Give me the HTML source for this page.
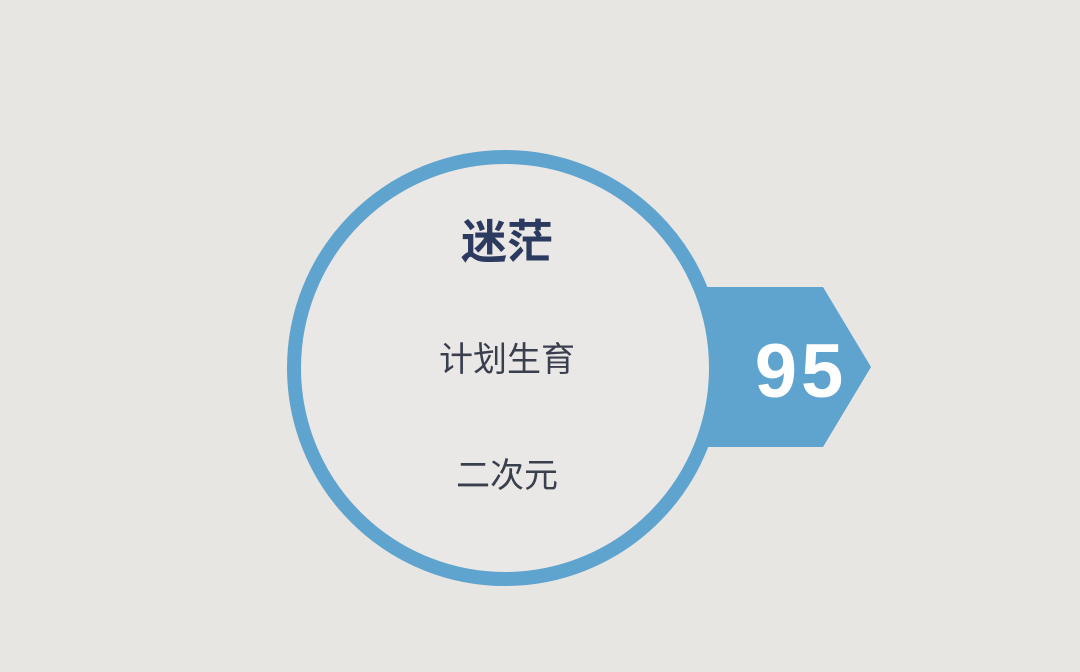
<!DOCTYPE html>
<html><head><meta charset="utf-8"><style>
html,body{margin:0;padding:0}
body{width:1080px;height:672px;background:#e7e6e2;position:relative;overflow:hidden;font-family:"Liberation Sans","Noto Sans CJK SC",sans-serif}
.t{position:absolute;left:0;width:1014px;text-align:center;color:#2e3a55}
</style></head><body>
<svg width="1080" height="672" style="position:absolute;left:0;top:0">
<polygon points="700,287 823,287 871,367 823,447 700,447" fill="#5fa3cf"/>
<circle cx="505" cy="368" r="211" fill="#eae8e6" stroke="#5fa3cf" stroke-width="14"/>
<text x="801" y="397" text-anchor="middle" font-family="Liberation Sans, sans-serif" font-weight="bold" font-size="76" fill="#fff" letter-spacing="4">95</text>
</svg>
<div class="t" style="top:206px;font-size:46px;font-weight:bold;color:#2b3a5e">迷茫</div>
<div class="t" style="top:332px;font-size:34px;color:#3a3f4e">计划生育</div>
<div class="t" style="top:448px;font-size:34px;color:#3a3f4e">二次元</div>
</body></html>
